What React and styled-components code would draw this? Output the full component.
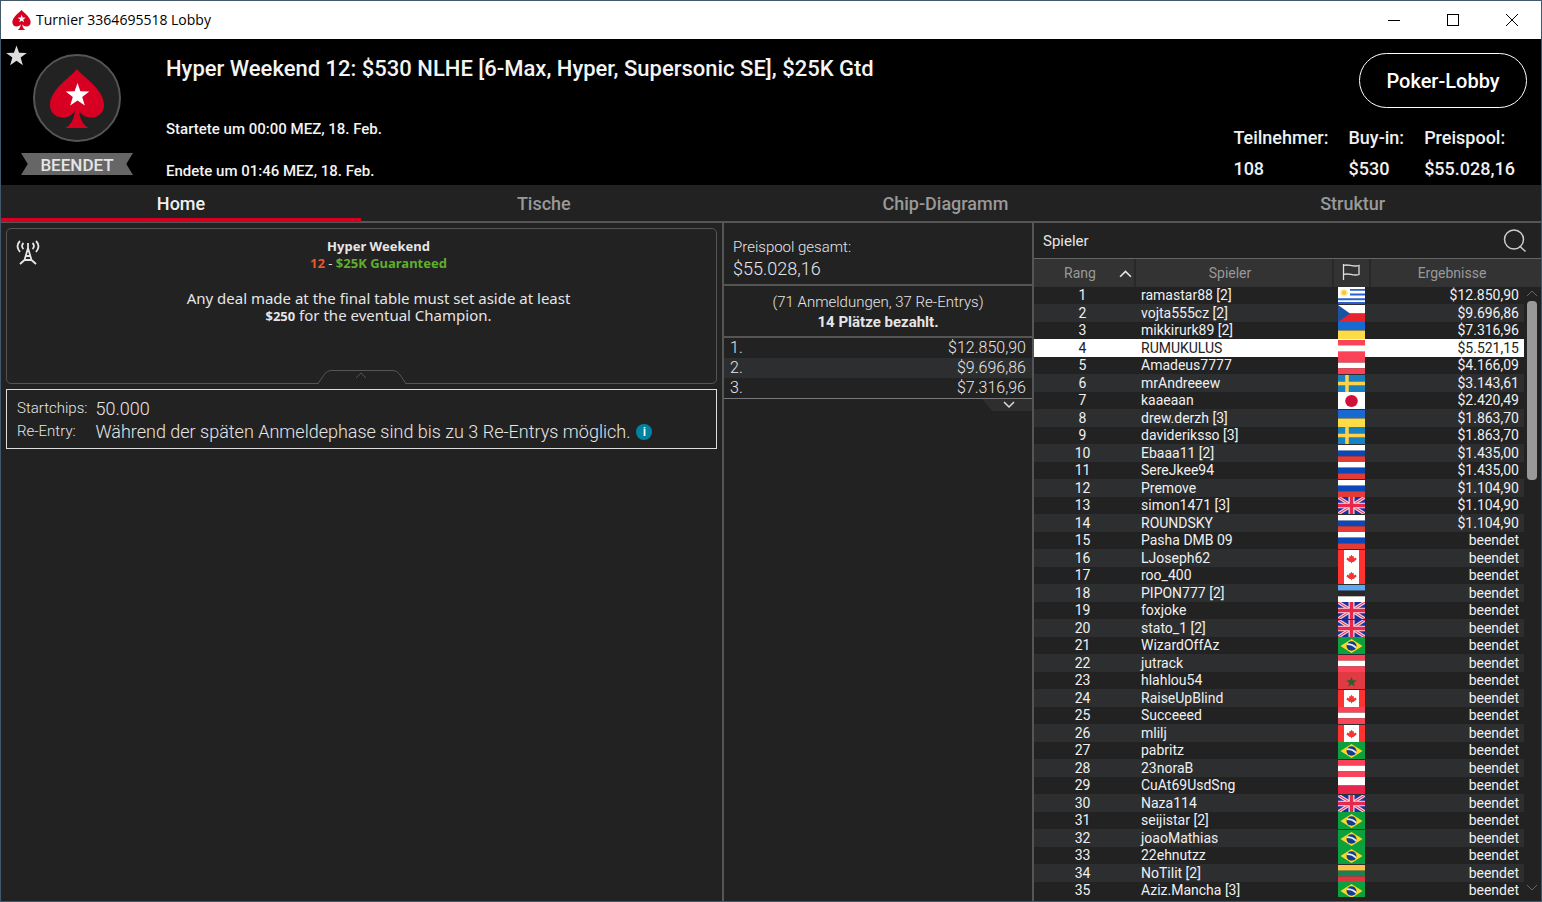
import React from "react";
import styled, { createGlobalStyle } from "styled-components";

const GlobalStyle = createGlobalStyle`
  * {
    box-sizing: border-box;
  }
  body {
    margin: 0;
    background-color: #222222;
    color: #e6e6e6;
    font-family: Roboto, "Liberation Sans", sans-serif;
    font-size: 14px;
  }
  button {
    padding: 0;
    border: none;
    background: none;
    color: inherit;
    font-family: inherit;
    cursor: pointer;
  }
  svg {
    display: block;
  }
`;

const Window = styled.div`
  height: 100vh;
  border: 1px solid #44586c;
  display: flex;
  flex-direction: column;
  overflow: hidden;
`;

const TitleBar = styled.div`
  height: 38px;
  flex-shrink: 0;
  padding-left: 11px;
  display: flex;
  align-items: center;
  background-color: #ffffff;
  color: #000000;
`;

const WindowTitle = styled.span`
  flex: 1;
  margin-left: 5px;
  font-family: "Open Sans", "Noto Sans", sans-serif;
  font-size: 14px;
  line-height: 18px;
`;

const WindowButton = styled.button`
  width: 59px;
  height: 38px;
  display: flex;
  align-items: center;
  justify-content: center;
`;

const Header = styled.header`
  position: relative;
  height: 146px;
  flex-shrink: 0;
  padding: 14px 14px 0 20px;
  display: flex;
  background-color: #000000;
`;

const Favorite = styled.button`
  position: absolute;
  top: 6px;
  left: 5px;
`;

const Badge = styled.div`
  width: 112px;
  display: flex;
  flex-direction: column;
  align-items: center;
`;

const BadgeCircle = styled.div`
  width: 88px;
  height: 88px;
  margin-top: 1px;
  display: flex;
  align-items: center;
  justify-content: center;
  border: 2px solid #555555;
  border-radius: 50%;
  background-color: #222222;
`;

const Ribbon = styled.div`
  width: 100%;
  height: 22px;
  margin-top: 11px;
  background-color: #666666;
  clip-path: polygon(0 0, 100% 0, 94% 50%, 100% 100%, 0 100%, 6% 50%);
  font-size: 17px;
  font-weight: 500;
  line-height: 24px;
  text-align: center;
`;

const Heading = styled.div`
  flex: 1;
  margin-left: 33px;
  color: #f4f4f4;
`;

const Title = styled.h1`
  margin: 0 0 34px;
  font-size: 22px;
  font-weight: 500;
  line-height: 32px;
`;

const Time = styled.p`
  margin: 0 0 22px;
  font-size: 15px;
  font-weight: 500;
  line-height: 20px;
`;

const Summary = styled.div`
  display: flex;
  flex-direction: column;
  align-items: flex-end;
`;

const LobbyButton = styled.button`
  width: 168px;
  height: 55px;
  border: 1px solid #ffffff;
  border-radius: 28px;
  color: #ffffff;
  font-size: 20px;
  font-weight: 500;
`;

const Stats = styled.dl`
  margin: 14px 12px 0 0;
  display: flex;
  gap: 20px;
  color: #f0f0f0;
  font-size: 18px;
  font-weight: 500;
  line-height: 31px;
`;

const StatLabel = styled.dt``;

const StatValue = styled.dd`
  margin: 0;
`;

const Tabs = styled.nav`
  height: 38px;
  flex-shrink: 0;
  display: flex;
  border-bottom: 2px solid #555555;
`;

const Tab = styled.button`
  flex: 1 1 auto;
  height: 37px;
  padding-top: 4px;
  border-bottom: 4px solid ${(props) => (props.$active ? "#d70022" : "transparent")};
  color: ${(props) => (props.$active ? "#f0f0f0" : "#999999")};
  font-size: 18px;
  font-weight: 500;
`;

const Content = styled.main`
  flex: 1;
  min-height: 0;
  display: grid;
  grid-template-columns: 721fr 310fr 509fr;
`;

const HomeColumn = styled.section`
  padding: 5px;
`;

const Announcement = styled.div`
  position: relative;
  height: 156px;
  padding: 9px 0 0 34px;
  border: 1px solid #555555;
  border-radius: 5px;
  font-family: "Noto Sans", "Open Sans", sans-serif;
  text-align: center;
  strong {
    font-size: 13px;
  }
`;

const Broadcast = styled.span`
  position: absolute;
  top: 10px;
  left: 9px;
`;

const Line = styled.p`
  margin: ${(props) => (props.$spaced ? "18px 0 0" : "0")};
  font-size: ${(props) => (props.$heading ? "13px" : "15px")};
  line-height: 17px;
`;

const Accent = styled.strong`
  color: ${(props) => props.$color};
`;

const CollapseButton = styled.button`
  position: absolute;
  bottom: -1px;
  left: 50%;
  transform: translateX(-50%);
`;

const Details = styled.dl`
  margin: 5px 0 0;
  padding: 7px 10px 5px;
  display: grid;
  grid-template-columns: auto 1fr;
  column-gap: 8px;
  border: 1px solid #dddddd;
  font-weight: 300;
  line-height: 23px;
`;

const DetailLabel = styled.dt`
  font-size: 15px;
`;

const DetailValue = styled.dd`
  margin: 0;
  display: flex;
  align-items: center;
  gap: 6px;
  font-size: 18px;
`;

const InfoButton = styled.button`
  width: 16px;
  height: 16px;
  border-radius: 50%;
  background-color: #0083a3;
  color: #ffffff;
  font-size: 13px;
  font-weight: 500;
  line-height: 16px;
`;

const PrizeColumn = styled.section`
  border-left: 2px solid #555555;
  font-size: 15px;
  font-weight: 300;
  line-height: 20px;
`;

const PrizeTotal = styled.div`
  height: 63px;
  padding: 13px 9px 0;
  border-bottom: 2px solid #555555;
  line-height: 22px;
`;

const Amount = styled.div`
  font-size: 18px;
`;

const Entries = styled.div`
  height: 52px;
  padding-top: 6px;
  border-bottom: 2px solid #555555;
  text-align: center;
`;

const Paid = styled.strong`
  display: block;
  font-weight: 700;
`;

const PrizeTable = styled.table`
  width: 100%;
  border-collapse: collapse;
  border-bottom: 1px solid #777777;
  tr:nth-child(even) {
    background-color: #2c2e30;
  }
  td {
    height: 20px;
    padding: 0 6px;
    font-size: 16px;
  }
  td:last-child {
    text-align: right;
  }
`;

const ExpandButton = styled.button`
  width: 50px;
  height: 12px;
  margin-left: auto;
  padding-left: 4px;
  display: flex;
  align-items: center;
  justify-content: center;
  background-color: #2e2e2e;
  clip-path: polygon(0 0, 100% 0, 100% 100%, 20% 100%);
`;

const PlayerColumn = styled.section`
  min-height: 0;
  border-left: 2px solid #555555;
  display: flex;
  flex-direction: column;
`;

const PlayerBar = styled.div`
  height: 36px;
  flex-shrink: 0;
  padding: 0 14px 0 9px;
  display: flex;
  align-items: center;
  justify-content: space-between;
  border-bottom: 1px solid #666666;
  font-size: 15px;
`;

const PlayerList = styled.div`
  position: relative;
  flex: 1;
  min-height: 0;
  margin-bottom: 4px;
  overflow: hidden;
`;

const PlayerTable = styled.table`
  width: 100%;
  border-collapse: collapse;
  table-layout: fixed;
`;

const HeadCell = styled.th`
  height: 28px;
  padding: 0 8px 0 0;
  border-right: 2px solid #282828;
  background-color: #333333;
  color: #999999;
  font-size: 14px;
  font-weight: 400;
  text-align: center;
  &:last-child {
    border-right: none;
  }
`;

const RankHead = styled.div`
  padding-left: 30px;
  display: flex;
  align-items: center;
  justify-content: space-between;
`;

const IconHeadCell = styled(HeadCell)`
  padding: 0;
`;

const RankHeadCell = styled(HeadCell)`
  padding-right: 2px;
`;

const FlagHead = styled.span`
  display: flex;
  justify-content: center;
`;

const PlayerRow = styled.tr`
  color: ${(props) => (props.$selected ? "#222222" : "#f0f0f0")};
  td {
    height: 17px;
    padding: 0;
    background-color: ${(props) => (props.$selected ? "#ffffff" : "#222222")};
    font-size: 14px;
    line-height: 17px;
  }
  &:nth-child(even) td {
    height: 18px;
    background-color: ${(props) => (props.$selected ? "#ffffff" : "#2c2e30")};
  }
  td:first-child {
    padding-right: 4px;
    text-align: center;
  }
  td:nth-child(2) {
    padding-left: 6px;
  }
  td:nth-child(3) svg {
    margin: 0 auto;
  }
  td:nth-child(4) {
    padding-right: 5px;
    text-align: right;
  }
  &:nth-child(n) td:last-child {
    background-color: #222222;
  }
`;

const Scrollbar = styled.div`
  position: absolute;
  top: 28px;
  right: 3px;
  bottom: 3px;
  width: 12px;
  display: flex;
  flex-direction: column;
  align-items: center;
  justify-content: space-between;
`;

const Track = styled.div`
  flex: 1;
  margin: 2px 0;
`;

const Thumb = styled.div`
  width: 10px;
  height: 31%;
  border-radius: 4px;
  background-color: #999999;
`;

const STAR = "M12 0l2.9 8.3 8.9.2-7.1 5.4 2.6 8.6-7.3-5.1-7.3 5.1 2.6-8.6L.2 8.5l8.9-.2z";

const Spade = ({ width, height }) => (
  <svg width={width} height={height} viewBox="0 0 54 59" aria-hidden="true">
    <path
      fill="#d70022"
      d="M27 0C33 8 54 20 54 36C54 44 48 48.500 41 48.500C36 48.500 32.500 46.500 29 42C30 49 32 55 38.500 59H15.500C22 55 24 49 25 42C21.500 46.500 18 48.500 13 48.500C6 48.500 0 44 0 36C0 20 21 8 27 0Z"
    />
    <path fill="#ffffff" transform="translate(15.500 14)" d={STAR} />
  </svg>
);

const Chevron = ({ width, height, up, color, weight = 1 }) => (
  <svg width={width} height={height} viewBox="0 0 12 8" fill="none" aria-hidden="true">
    <path d={up ? "M1 7l5-5 5 5" : "M1 1l5 5 5-5"} stroke={color} strokeWidth={weight} />
  </svg>
);

const stripes = (...colors) =>
  colors.map((color, i) => (
    <rect
      key={i}
      y={(18 / colors.length) * i}
      width="27"
      height={18 / colors.length}
      fill={color}
    />
  ));

const FLAGS = {
  uy: (
    <>
      <rect width="27" height="18" fill="#ffffff" />
      <path d="M12 3h15M12 8h15M0 13h27M0 17h27" stroke="#2b5fc9" strokeWidth="2" />
      <circle cx="6" cy="6" r="4" fill="#fff0b8" />
      <circle cx="6" cy="6" r="2.500" fill="#fbc63c" />
    </>
  ),
  cz: (
    <>
      {stripes("#ffffff", "#e8232c")}
      <path d="M0 0l12 9-12 9z" fill="#1c53a0" />
    </>
  ),
  ua: stripes("#186ad2", "#ffdb45"),
  at: stripes("#fa4358", "#ffffff", "#fa4358"),
  se: (
    <>
      <rect width="27" height="18" fill="#1a80bf" />
      <path d="M9 0v18M0 9h27" stroke="#ffd24a" strokeWidth="3.500" />
    </>
  ),
  jp: (
    <>
      <rect width="27" height="18" fill="#ffffff" />
      <circle cx="13.500" cy="9.500" r="6.300" fill="#cf1039" />
    </>
  ),
  ru: stripes("#ffffff", "#0c47b7", "#e53b35"),
  gb: (
    <>
      <rect width="27" height="18" fill="#1a2fa0" />
      <path d="M0 0l27 18M27 0L0 18" stroke="#f5c9d4" strokeWidth="3.500" />
      <path d="M0 0l27 18M27 0L0 18" stroke="#e8274b" strokeWidth="1" />
      <path d="M13.500 0v18M0 9h27" stroke="#f8dbe2" strokeWidth="6" />
      <path d="M13.500 0v18M0 9h27" stroke="#e8274b" strokeWidth="3.500" />
    </>
  ),
  ca: (
    <>
      <rect width="27" height="18" fill="#ff3131" />
      <rect x="6" width="15" height="18" fill="#ffffff" />
      <path
        d="M13.500 5l1.300 2 1.200-.500-.200 2.500 2.200-1 .500 2-3 2.800h-1.400V14h-1v-1.200h-1.400l-3.200-2.800.700-2 2.100 1-.200-2.500 1.200.500z"
        fill="#f53434"
      />
    </>
  ),
  ee: stripes("#5fa8f0", "#282828", "#ffffff"),
  br: (
    <>
      <rect width="27" height="18" fill="#0ca03f" />
      <path d="M13.500 2l11 7.500-11 7.500-11-7.500z" fill="#ffd91f" />
      <circle cx="13.500" cy="9.500" r="5" fill="#143a91" />
      <path d="M9 7.500q6 0 9 4" stroke="#e6edf5" strokeWidth="1.800" fill="none" />
    </>
  ),
  ma: (
    <>
      <rect width="27" height="18" fill="#e03b42" />
      <path d={STAR} transform="translate(8 5) scale(.460)" fill="#255f33" />
    </>
  ),
  pl: stripes("#ffffff", "#e8254d"),
  lt: stripes("#ffc246", "#1c8052", "#dc3640"),
};

const Flag = ({ code }) => (
  <svg
    width="27"
    height="17"
    viewBox="0 0 27 18"
    preserveAspectRatio="none"
    role="img"
    aria-label={code}
  >
    {FLAGS[code]}
  </svg>
);

const players = [
  ["ramastar88 [2]", "uy", "$12.850,90"],
  ["vojta555cz [2]", "cz", "$9.696,86"],
  ["mikkirurk89 [2]", "ua", "$7.316,96"],
  ["RUMUKULUS", "at", "$5.521,15"],
  ["Amadeus7777", "at", "$4.166,09"],
  ["mrAndreeew", "se", "$3.143,61"],
  ["kaaeaan", "jp", "$2.420,49"],
  ["drew.derzh [3]", "ua", "$1.863,70"],
  ["davideriksso [3]", "se", "$1.863,70"],
  ["Ebaaa11 [2]", "ru", "$1.435,00"],
  ["SereJkee94", "ru", "$1.435,00"],
  ["Premove", "ru", "$1.104,90"],
  ["simon1471 [3]", "gb", "$1.104,90"],
  ["ROUNDSKY", "ru", "$1.104,90"],
  ["Pasha DMB 09", "ru", "beendet"],
  ["LJoseph62", "ca", "beendet"],
  ["roo_400", "ca", "beendet"],
  ["PIPON777 [2]", "ee", "beendet"],
  ["foxjoke", "gb", "beendet"],
  ["stato_1 [2]", "gb", "beendet"],
  ["WizardOffAz", "br", "beendet"],
  ["jutrack", "at", "beendet"],
  ["hlahlou54", "ma", "beendet"],
  ["RaiseUpBlind", "ca", "beendet"],
  ["Succeeed", "at", "beendet"],
  ["mlilj", "ca", "beendet"],
  ["pabritz", "br", "beendet"],
  ["23noraB", "at", "beendet"],
  ["CuAt69UsdSng", "pl", "beendet"],
  ["Naza114", "gb", "beendet"],
  ["seijistar [2]", "br", "beendet"],
  ["joaoMathias", "br", "beendet"],
  ["22ehnutzz", "br", "beendet"],
  ["NoTilit [2]", "lt", "beendet"],
  ["Aziz.Mancha [3]", "br", "beendet"],
];

const stats = [
  ["Teilnehmer:", "108"],
  ["Buy-in:", "$530"],
  ["Preispool:", "$55.028,16"],
];

const App = () => (
  <Window>
    <GlobalStyle />
    <TitleBar>
      <Spade width={19} height={20} />
      <WindowTitle>Turnier 3364695518 Lobby</WindowTitle>
      <WindowButton aria-label="Minimieren">
        <svg width="12" height="12" shapeRendering="crispEdges">
          <path d="M0 6.500h12" stroke="#000000" />
        </svg>
      </WindowButton>
      <WindowButton aria-label="Maximieren">
        <svg width="12" height="12" fill="none" shapeRendering="crispEdges">
          <rect x=".5" y=".5" width="11" height="11" stroke="#000000" />
        </svg>
      </WindowButton>
      <WindowButton aria-label="Schließen">
        <svg width="12" height="12">
          <path d="M0 0l12 12M12 0L0 12" stroke="#000000" />
        </svg>
      </WindowButton>
    </TitleBar>
    <Header>
      <Favorite aria-label="Favorit">
        <svg width="21" height="21" viewBox="0 0 24 23">
          <path d={STAR} fill="#dddddd" />
        </svg>
      </Favorite>
      <Badge>
        <BadgeCircle>
          <Spade width={54} height={59} />
        </BadgeCircle>
        <Ribbon>BEENDET</Ribbon>
      </Badge>
      <Heading>
        <Title>Hyper Weekend 12: $530 NLHE [6-Max, Hyper, Supersonic SE], $25K Gtd</Title>
        <Time>Startete um 00:00 MEZ, 18. Feb.</Time>
        <Time>Endete um 01:46 MEZ, 18. Feb.</Time>
      </Heading>
      <Summary>
        <LobbyButton>Poker-Lobby</LobbyButton>
        <Stats>
          {stats.map(([label, value]) => (
            <div key={label}>
              <StatLabel>{label}</StatLabel>
              <StatValue>{value}</StatValue>
            </div>
          ))}
        </Stats>
      </Summary>
    </Header>
    <Tabs>
      {["Home", "Tische", "Chip-Diagramm", "Struktur"].map((tab) => (
        <Tab key={tab} $active={tab === "Home"}>
          {tab}
        </Tab>
      ))}
    </Tabs>
    <Content>
      <HomeColumn>
        <Announcement>
          <Broadcast>
            <svg
              width="24"
              height="26"
              viewBox="0 0 24 26"
              fill="none"
              stroke="#e6e6e6"
              strokeWidth="1.800"
              aria-hidden="true"
            >
              <path d="M4 2q-5 5 0 11M7.500 4q-3 3 0 6M20 2q5 5 0 11M16.500 4q3 3 0 6" />
              <path d="M12 4v9M12 9L8.500 21M12 9l3.500 12M10 17h4M8 21h8M4 25l4.500-4M20 25l-4.500-4" />
            </svg>
          </Broadcast>
          <Line $heading>
            <strong>Hyper Weekend</strong>
          </Line>
          <Line $heading>
            <Accent $color="#e8562a">12</Accent> - <Accent $color="#5fae2e">$25K Guaranteed</Accent>
          </Line>
          <Line $spaced>Any deal made at the final table must set aside at least</Line>
          <Line>
            <strong>$250</strong> for the eventual Champion.
          </Line>
          <CollapseButton aria-label="Einklappen">
            <svg width="88" height="15" viewBox="0 0 88 15" fill="none">
              <path
                d="M0 14.500L7 4.500Q9.500 1.500 13 1.500H75Q78.500 1.500 81 4.500L88 14.500"
                fill="#222222"
                stroke="#555555"
              />
              <path d="M1 14.500h86" stroke="#222222" />
              <path d="M38 9l5-5 5 5" stroke="#555555" />
            </svg>
          </CollapseButton>
        </Announcement>
        <Details>
          <DetailLabel>Startchips:</DetailLabel>
          <DetailValue>50.000</DetailValue>
          <DetailLabel>Re-Entry:</DetailLabel>
          <DetailValue>
            Während der späten Anmeldephase sind bis zu 3 Re-Entrys möglich.
            <InfoButton>i</InfoButton>
          </DetailValue>
        </Details>
      </HomeColumn>
      <PrizeColumn>
        <PrizeTotal>
          Preispool gesamt:
          <Amount>$55.028,16</Amount>
        </PrizeTotal>
        <Entries>
          (71 Anmeldungen, 37 Re-Entrys)
          <Paid>14 Plätze bezahlt.</Paid>
        </Entries>
        <PrizeTable>
          <tbody>
            {players.slice(0, 3).map(([name, , prize], i) => (
              <tr key={name}>
                <td>{i + 1}.</td>
                <td>{prize}</td>
              </tr>
            ))}
          </tbody>
        </PrizeTable>
        <ExpandButton aria-label="Mehr Preise">
          <Chevron width={12} height={8} color="#dddddd" weight={1.5} />
        </ExpandButton>
      </PrizeColumn>
      <PlayerColumn>
        <PlayerBar>
          Spieler
          <button aria-label="Suchen">
            <svg width="24" height="24" fill="none" stroke="#cccccc" strokeWidth="1.500">
              <circle cx="11" cy="10.500" r="9.500" />
              <path d="M16.500 17l6 5.500" />
            </svg>
          </button>
        </PlayerBar>
        <PlayerList>
          <PlayerTable>
            <colgroup>
              <col width="101" />
              <col />
              <col width="37" />
              <col width="154" />
              <col width="17" />
            </colgroup>
            <thead>
              <tr>
                <RankHeadCell>
                  <RankHead>
                    Rang
                    <Chevron width={13} height={9} up color="#e6e6e6" weight={1.5} />
                  </RankHead>
                </RankHeadCell>
                <HeadCell>Spieler</HeadCell>
                <IconHeadCell aria-label="Land">
                  <FlagHead>
                    <svg width="18" height="18" fill="none" stroke="#dddddd" strokeWidth="1.300">
                      <path d="M1.500 0v16M1.500 1.500c5-2 9 2 15.500 0v9c-6 2-10-2-15.500 0" />
                    </svg>
                  </FlagHead>
                </IconHeadCell>
                <HeadCell colSpan={2}>Ergebnisse</HeadCell>
              </tr>
            </thead>
            <tbody>
              {players.map(([name, flag, result], i) => (
                <PlayerRow key={name} $selected={name === "RUMUKULUS"}>
                  <td>{i + 1}</td>
                  <td>{name}</td>
                  <td>
                    <Flag code={flag} />
                  </td>
                  <td>{result}</td>
                  <td />
                </PlayerRow>
              ))}
            </tbody>
          </PlayerTable>
          <Scrollbar>
            <Chevron width={12} height={12} up color="#666666" />
            <Track>
              <Thumb />
            </Track>
            <Chevron width={12} height={12} color="#666666" />
          </Scrollbar>
        </PlayerList>
      </PlayerColumn>
    </Content>
  </Window>
);

export default App;
